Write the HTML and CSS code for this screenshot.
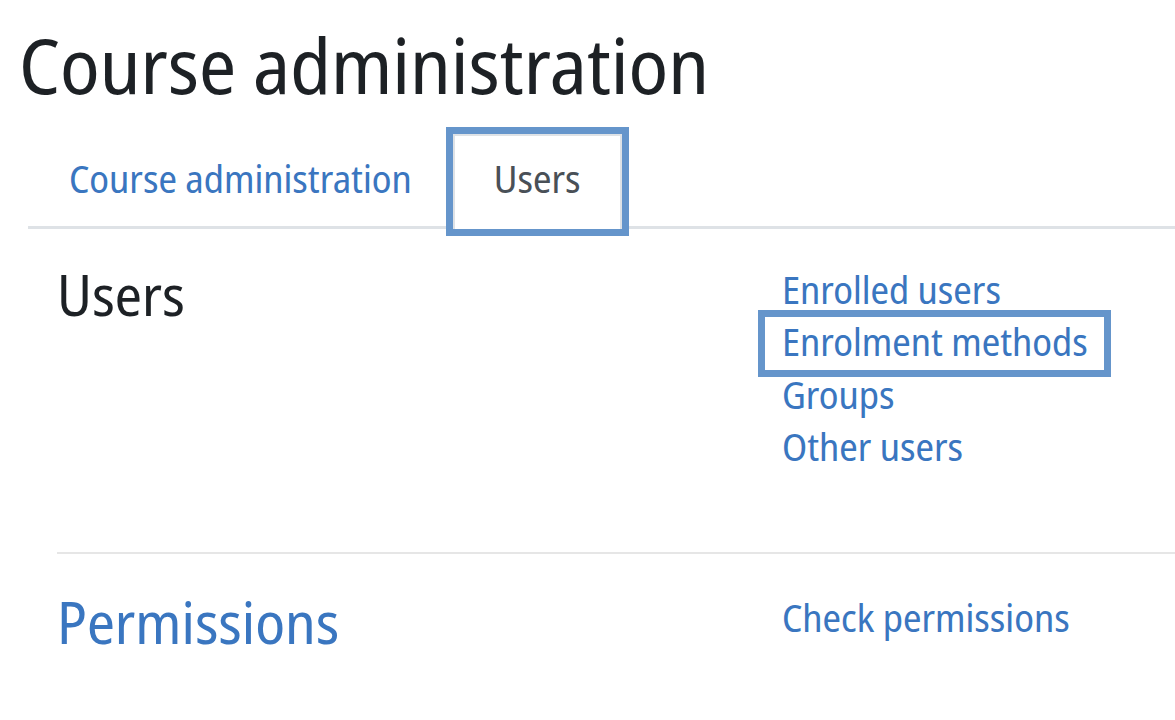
FILE: index.html
```html
<!DOCTYPE html>
<html lang="en">
<head>
<meta charset="utf-8">
<title>Course administration</title>
<link rel="stylesheet" href="styles.css">
</head>
<body>
<div class="page">
  <h1 class="page-title">Course administration</h1>
  <ul class="tabs">
    <li class="tab"><a class="tab-link" href="#">Course administration</a></li>
    <li class="tab"><a class="tab-link active highlight" href="#">Users</a></li>
  </ul>
  <div class="sections">
    <section class="row">
      <h2 class="row-title">Users</h2>
      <ul class="row-links">
        <li><a href="#">Enrolled users</a></li>
        <li><a class="highlight-link" href="#">Enrolment methods</a></li>
        <li><a href="#">Groups</a></li>
        <li><a href="#">Other users</a></li>
      </ul>
    </section>
    <section class="row row-bordered">
      <h2 class="row-title"><a href="#">Permissions</a></h2>
      <ul class="row-links">
        <li><a href="#">Check permissions</a></li>
      </ul>
    </section>
  </div>
</div>
</body>
</html>
```
FILE: styles.css
```css
html, body {
  margin: 0;
  padding: 0;
  background: #ffffff;
}
body {
  font-family: "Noto Sans Display", "Noto Sans", sans-serif;
  font-stretch: condensed;
  color: #1d2125;
  overflow: hidden;
}
a {
  color: #3a76c0;
  text-decoration: none;
}
ul {
  list-style: none;
  margin: 0;
  padding: 0;
}
.page {
  padding: 19px 0 0 19px;
}
.page-title {
  margin: 0;
  font-size: 76.5px;
  font-weight: 400;
  line-height: 1.2;
}
.tabs {
  display: flex;
  margin: 0 0 0 9px;
  border-bottom: 3px solid #dee2e6;
  height: 115px;
  align-items: flex-end;
}
.tab {
  margin-bottom: -3px;
}
.tab-link {
  display: block;
  font-size: 38px;
  line-height: 54px;
  padding: 15px 39px 24px;
  border: 2px solid transparent;
  border-bottom: 0;
}
.tab-link.active {
  color: #495057;
  border-color: #dee2e6;
  background: #fff;
}
.highlight {
  outline: 7px solid #6595cb;
}
.sections {
  margin-left: 38px;
}
.row {
  display: grid;
  grid-template-columns: 725px 1fr;
  padding: 34px 0 79px;
}
.row-bordered {
  border-top: 2px solid #e6e6e6;
  padding-top: 37px;
}
.row-title {
  margin: 0;
  font-weight: 400;
  font-size: 56px;
  line-height: 1.14;
}
.row-bordered .row-title {
  font-size: 57.5px;
  line-height: 1.09;
}
.row-links {
  font-size: 38px;
  line-height: 52.5px;
}
.highlight-link {
  display: inline-block;
  line-height: 40px;
  padding: 4px 16px 9px 17px;
  margin: -4px -16px -3px -17px;
  outline: 7px solid #6595cb;
}
```
